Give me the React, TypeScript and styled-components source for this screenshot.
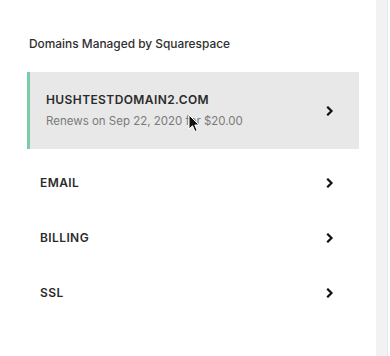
import styled, { createGlobalStyle } from "styled-components";

const GlobalStyle = createGlobalStyle`
  html, body {
    margin: 0;
    padding: 0;
    background: #ffffff;
  }
  body {
    font-family: Inter, "Liberation Sans", sans-serif;
    -webkit-font-smoothing: antialiased;
  }
`;

//#region styles
const Frame = styled.div`
  width: 390px;
  height: 356px;
  display: flex;
  background: #ffffff;
  overflow: hidden;
`;

const Panel = styled.div`
  width: 376px;
  padding: 36px 0 0 0;
  box-sizing: border-box;
`;

const Scrollbar = styled.div`
  width: 11px;
  background: #f2f2f2;
  border-right: 1px solid #e6e6e6;
`;

const Heading = styled.h2`
  margin: 0 0 20px 29px;
  font-size: 11.9px;
  font-weight: 500;
  color: #2f2f2f;
  line-height: 16px;
`;

const List = styled.div`
  display: flex;
  flex-direction: column;
`;

const Row = styled.div<{ $active?: boolean }>`
  position: relative;
  display: flex;
  align-items: center;
  justify-content: space-between;
  box-sizing: border-box;
  margin: 0 17px 0 ${(p) => (p.$active ? "27px" : "40px")};
  height: ${(p) => (p.$active ? "77px" : "55px")};
  padding: ${(p) => (p.$active ? "0 25px 0 16px" : "0 25px 0 0")};
  background: ${(p) => (p.$active ? "#e8e8e8" : "transparent")};
  border-left: ${(p) => (p.$active ? "3px solid #7ccba8" : "none")};
`;

const TextBlock = styled.div`
  display: flex;
  flex-direction: column;
  gap: 6px;
`;

const Label = styled.div`
  font-size: 12px;
  font-weight: 600;
  letter-spacing: 0.4px;
  color: #2b2b2b;
  text-transform: uppercase;
  line-height: 15px;
`;

const Sub = styled.div`
  font-size: 11.5px;
  color: #7a7a7a;
  line-height: 16px;
`;

const Spacer = styled.div`
  height: 6px;
`;

const Cursor = styled.svg`
  position: absolute;
  left: 158px;
  top: 42px;
`;
//#endregion styles

function Chevron() {
  return (
    <svg width="8" height="10" viewBox="0 0 8 10">
      <path d="M2 1.5 L5.5 5 L2 8.5" fill="none" stroke="#111" strokeWidth="2.2" strokeLinecap="square" />
    </svg>
  );
}

const sections = ["Email", "Billing", "SSL"];

export default function App() {
  return (
    <>
      <GlobalStyle />
      <Frame>
        <Panel>
          <Heading>Domains Managed by Squarespace</Heading>
          <List>
            <Row $active>
              <TextBlock>
                <Label>hushtestdomain2.com</Label>
                <Sub>Renews on Sep 22, 2020 for $20.00</Sub>
              </TextBlock>
              <Chevron />
              <Cursor width="12" height="19" viewBox="0 0 12 19">
                <path d="M1 1 L1 15 L4.5 11.8 L7 17.5 L9.2 16.5 L6.8 11 L11 11 Z" fill="#111" stroke="#fff" strokeWidth="1" />
              </Cursor>
            </Row>
            <Spacer />
            {sections.map((s) => (
              <Row key={s}>
                <Label>{s}</Label>
                <Chevron />
              </Row>
            ))}
          </List>
        </Panel>
        <Scrollbar />
      </Frame>
    </>
  );
}
